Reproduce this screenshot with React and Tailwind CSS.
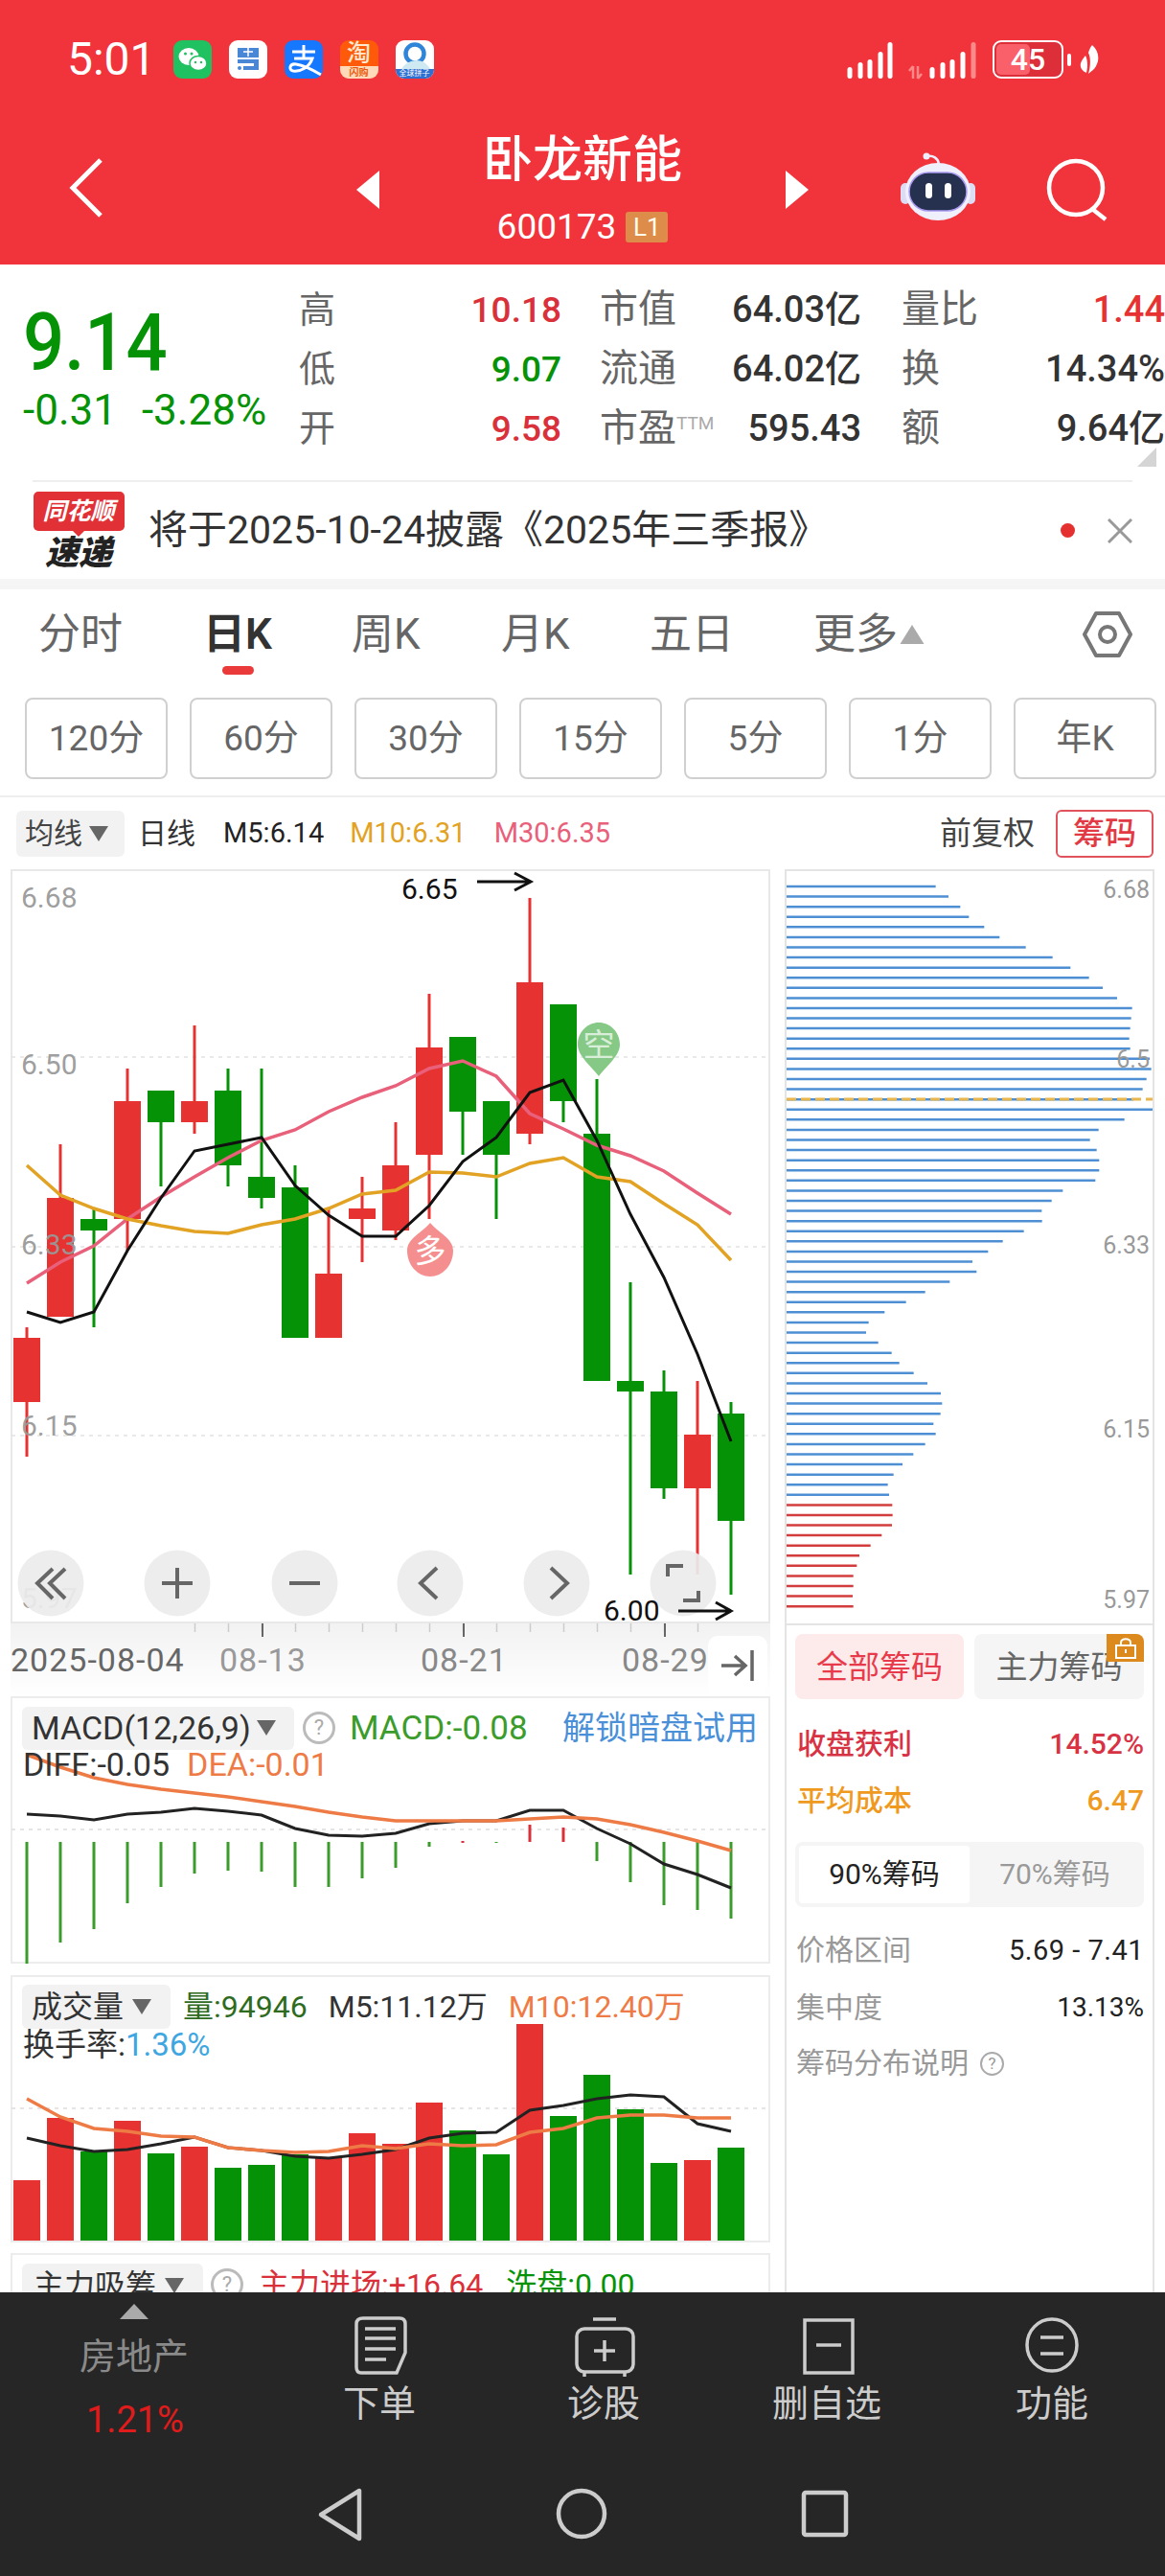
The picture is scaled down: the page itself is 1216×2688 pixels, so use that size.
import React from "react";

const GREEN = "#069206";
const RED = "#e73232";

// candle x = center of slot i, all y values are page pixels
const cx = (i) => 28 + 35 * i;

const candles = [
  ["r", 1385, 1396, 1463, 1520],
  ["r", 1194, 1250, 1374, 1374],
  ["g", 1262, 1272, 1284, 1385],
  ["r", 1115, 1149, 1272, 1305],
  ["g", 1138, 1138, 1171, 1238],
  ["r", 1070, 1149, 1171, 1183],
  ["g", 1115, 1138, 1216, 1238],
  ["g", 1115, 1228, 1250, 1261],
  ["g", 1216, 1239, 1396, 1396],
  ["r", 1261, 1329, 1396, 1396],
  ["r", 1228, 1261, 1272, 1317],
  ["r", 1171, 1216, 1284, 1294],
  ["r", 1037, 1093, 1205, 1272],
  ["g", 1082, 1082, 1160, 1205],
  ["g", 1149, 1149, 1205, 1272],
  ["r", 937, 1025, 1183, 1194],
  ["g", 1048, 1048, 1149, 1171],
  ["g", 1126, 1183, 1441, 1441],
  ["g", 1338, 1441, 1452, 1643],
  ["g", 1430, 1452, 1553, 1564],
  ["r", 1441, 1497, 1553, 1643],
  ["g", 1463, 1475, 1587, 1664],
];

const m5 = [1369, 1380, 1369, 1305, 1250, 1201, 1194, 1187, 1237, 1268, 1290, 1290, 1258, 1212, 1187, 1140, 1127, 1190, 1267, 1333, 1413, 1504];
const m10 = [1216, 1247, 1261, 1272, 1279, 1285, 1287, 1278, 1272, 1261, 1246, 1242, 1223, 1224, 1228, 1214, 1208, 1228, 1233, 1256, 1278, 1315];
const m30 = [1339, 1317, 1300, 1272, 1249, 1228, 1208, 1190, 1179, 1160, 1145, 1133, 1115, 1107, 1123, 1162, 1178, 1195, 1206, 1222, 1245, 1267];

const diff = [1893, 1895, 1899, 1893, 1891, 1887, 1890, 1894, 1908, 1915, 1916, 1913, 1903, 1900, 1900, 1889, 1889, 1908, 1924, 1945, 1956, 1970];
const dea = [1831, 1844, 1855, 1862, 1867, 1871, 1875, 1880, 1885, 1891, 1896, 1900, 1900, 1900, 1900, 1898, 1896, 1898, 1904, 1912, 1921, 1931];
const macdBars = [2049, 2027, 2013, 1986, 1969, 1955, 1952, 1953, 1969, 1969, 1960, 1949, 1927, 1921, 1923, 1904, 1907, 1942, 1964, 1988, 1993, 2002];

const volTops = [2275, 2210, 2245, 2213, 2247, 2240, 2262, 2259, 2248, 2252, 2226, 2237, 2194, 2223, 2248, 2112, 2208, 2165, 2201, 2257, 2254, 2241];
const volColors = "rrgrgrgggrrrrggrggggrg";
const volBlack = [2231, 2239, 2245, 2243, 2237, 2230, 2241, 2244, 2250, 2252, 2248, 2243, 2231, 2226, 2225, 2202, 2197, 2190, 2186, 2188, 2216, 2224];
const volOrange = [2190, 2209, 2221, 2224, 2229, 2230, 2241, 2244, 2246, 2245, 2239, 2242, 2237, 2239, 2238, 2225, 2221, 2210, 2207, 2207, 2210, 2210];

const depth = [530, 570, 607, 634, 682, 730, 812, 896, 952, 1010, 1053, 1098, 1145, 1142, 1139, 1136, 1139, 1200, 1205, 1190, 1178, 1150, 1212, 1121, 1040, 1013, 1034, 1042, 1042, 1030, 928, 893, 862, 863, 806, 740, 694, 645, 658, 574, 497, 437, 370, 320, 312, 350, 392, 416, 461, 504, 546, 550, 545, 523, 530, 497, 460, 426, 398, 380, 384, 394, 395, 393, 361, 326, 291, 283, 272, 272, 270, 272];

const pts = (ys) => ys.map((y, i) => `${cx(i)},${y}`).join(" ");

function Tri({ className }) {
  return (
    <svg viewBox="0 0 20 16" className={className}>
      <path d="M0 0H20L10 16Z" fill="#666" />
    </svg>
  );
}

function Help() {
  return (
    <span className="flex h-[34px] w-[34px] shrink-0 items-center justify-center rounded-full border-[3px] border-[#bbb] text-[22px] leading-none text-[#aaa]">
      ?
    </span>
  );
}

function StatusBar() {
  return (
    <div className="flex h-[124px] items-center pl-[70px] pr-[69px]">
      <span className="mr-[18px] text-[48px] leading-none text-white">5:01</span>
      <div className="flex gap-[18px]">
        <div className="h-10 w-10 overflow-hidden rounded-[9px] bg-[#1fc160]">
          <svg viewBox="0 0 40 40" className="h-10 w-10">
            <ellipse cx="16" cy="17" rx="10.5" ry="9" fill="#fff" />
            <ellipse cx="26" cy="24" rx="9" ry="7.5" fill="#fff" stroke="#1fc160" strokeWidth="1.5" />
            <circle cx="12.5" cy="14" r="1.5" fill="#1fc160" />
            <circle cx="19" cy="14" r="1.5" fill="#1fc160" />
            <circle cx="23" cy="23" r="1.2" fill="#1fc160" />
            <circle cx="29" cy="23" r="1.2" fill="#1fc160" />
          </svg>
        </div>
        <div className="h-10 w-10 overflow-hidden rounded-[9px] bg-white">
          <svg viewBox="0 0 40 40" className="h-10 w-10">
            <path d="M9 8H31V18H9Z" fill="#4a86d6" />
            <path d="M9 20H31V31H15V27H26V24H9Z" fill="#4a86d6" />
            <circle cx="11" cy="29" r="2" fill="#4a86d6" />
            <path d="M20 8V17M15 12H25" stroke="#fff" strokeWidth="1.5" />
          </svg>
        </div>
        <div className="h-10 w-10 overflow-hidden rounded-[9px] bg-[#1677ff]">
          <svg viewBox="0 0 40 40" className="h-10 w-10">
            <path d="M8 12H32M20 5V18M10 19H29C26 28 17 33 9 32C4 31 5 24 12 25C19 26 28 30 38 36" fill="none" stroke="#fff" strokeWidth="3" />
          </svg>
        </div>
        <div className="flex h-10 w-10 flex-col items-center overflow-hidden rounded-[9px] bg-[#ff5a0a]">
          <span className="text-[25px] font-medium leading-[27px] text-[#ffe9d0]">淘</span>
          <span className="h-[13px] w-full bg-[#ffd9b8] text-center text-[10px] font-bold leading-[13px] text-[#e8590c]">闪购</span>
        </div>
        <div className="flex h-10 w-10 flex-col items-center overflow-hidden rounded-[9px] bg-white">
          <svg viewBox="0 0 40 30" className="h-[30px] w-10">
            <circle cx="20" cy="14" r="9.5" fill="none" stroke="#2f86d9" strokeWidth="4.5" />
            <path d="M6 30C12 20 28 16 36 30Z" fill="#cfe9f3" />
          </svg>
          <span className="h-[10px] w-full whitespace-nowrap bg-[#2f6fd0] text-center text-[8px] leading-[10px] text-white">全球拼子</span>
        </div>
      </div>
      <div className="ml-auto flex items-center">
        <svg viewBox="0 0 140 42" className="h-[42px] w-[140px]">
          {[[4, 12], [15, 17], [25, 20], [36, 28], [46, 38]].map(([x, h]) => (
            <rect key={x} x={x - 2.5} y={41 - h} width="5" height={h} rx="2.5" fill="#fff" />
          ))}
          <path d="M70 28V41M70 28L66 33M75 41V28M75 41L79 36" stroke="#f88" strokeWidth="2.5" fill="none" />
          {[[90, 12], [101, 17], [111, 20], [122, 28]].map(([x, h]) => (
            <rect key={x} x={x - 2.5} y={41 - h} width="5" height={h} rx="2.5" fill="#fff" />
          ))}
          <rect x="130.5" y="3" width="5" height="38" rx="2.5" fill="#f98a8a" />
        </svg>
        <div className="relative ml-[13px] flex h-[40px] w-[74px] items-center justify-center overflow-hidden rounded-[9px] border-[2.5px] border-white bg-[#dc2f3a] text-[32px] font-medium leading-none text-white">
          <span className="absolute bottom-[2px] left-[2px] top-[2px] w-[35px] rounded-[5px] bg-[#f9606a]" />
          <span className="relative">45</span>
        </div>
        <span className="ml-[4px] h-[13px] w-[4px] rounded-full bg-white" />
        <svg viewBox="0 0 20 30" className="ml-[9px] h-[30px] w-5">
          <path d="M13 0C20 6 21 15 17 22C15 26 11 28 9 30C11 24 12 14 9 8C10 5 11 2 13 0Z M6 11C9 17 8 25 7 29C2 27 0 23 1 19C2 16 4 13 6 11Z" fill="#fff" />
        </svg>
      </div>
    </div>
  );
}

function TitleBar() {
  return (
    <div className="relative flex h-[152px] items-start justify-center">
      <div className="flex flex-col items-center pt-[16px]">
        <span className="text-[52px] font-medium leading-[56px] text-white">卧龙新能</span>
        <div className="mt-[22px] flex items-center">
          <span className="text-[37px] leading-none text-white">600173</span>
          <span className="ml-[10px] flex h-8 w-11 items-center justify-center rounded-[3px] bg-[#dd8c4a] text-[26px] leading-none text-[#ffe]">L1</span>
        </div>
      </div>
      <svg viewBox="0 0 36 62" className="absolute left-[72px] top-[41px] h-[62px] w-9">
        <path d="M33 2L4 31L33 60" fill="none" stroke="#fff" strokeWidth="5" />
      </svg>
      <svg viewBox="0 0 24 40" className="absolute left-[372px] top-[54px] h-10 w-6">
        <path d="M24 0V40L0 20Z" fill="#fff" />
      </svg>
      <svg viewBox="0 0 24 40" className="absolute left-[820px] top-[54px] h-10 w-6">
        <path d="M0 0V40L24 20Z" fill="#fff" />
      </svg>
      <svg viewBox="0 0 80 72" className="absolute left-[939px] top-[35px] h-[72px] w-20">
        <path d="M29 4C35 3 40 6 41 12" fill="none" stroke="#eef" strokeWidth="2.5" />
        <circle cx="28" cy="4" r="3.5" fill="#eef" />
        <rect x="1" y="32" width="10" height="22" rx="5" fill="#dcdcf5" />
        <rect x="69" y="32" width="10" height="22" rx="5" fill="#dcdcf5" />
        <ellipse cx="40" cy="41" rx="34" ry="30" fill="#f0f0fc" />
        <rect x="10" y="21" width="60" height="40" rx="20" fill="#26314f" stroke="#a99af0" strokeWidth="1.5" />
        <rect x="27" y="32" width="7" height="16" rx="3.5" fill="#fff" />
        <rect x="47" y="32" width="7" height="16" rx="3.5" fill="#fff" />
      </svg>
      <svg viewBox="0 0 64 66" className="absolute left-[1092px] top-[41px] h-[66px] w-16">
        <circle cx="31" cy="31" r="28" fill="none" stroke="#fff" strokeWidth="4.5" />
        <path d="M48 53L62 64" stroke="#fff" strokeWidth="4.5" />
      </svg>
    </div>
  );
}

function Quote() {
  const col1 = [["高", "10.18", "#d9303a"], ["低", "9.07", GREEN], ["开", "9.58", "#d9303a"]];
  const col2 = [["市值", "64.03亿"], ["流通", "64.02亿"], ["市盈", "595.43", "TTM"]];
  const col3 = [["量比", "1.44", RED], ["换", "14.34%", "#333"], ["额", "9.64亿", "#333"]];
  return (
    <div className="relative flex h-[225px] pt-[16px]">
      <div className="ml-[24px] w-[288px]">
        <div className="mt-[21px] scale-y-110 text-[76px] font-medium leading-[88px] text-[#069206]">9.14</div>
        <div className="mt-[5px] flex gap-[26px] text-[44px] leading-[44px] text-[#069206]">
          <span>-0.31</span>
          <span>-3.28%</span>
        </div>
      </div>
      <div className="w-[274px]">
        {col1.map(([l, v, c]) => (
          <div key={l} className="flex h-[62px] items-center justify-between">
            <span className="text-[38px] leading-none text-[#666]">{l}</span>
            <span className="text-[37px] font-medium leading-none" style={{ color: c }}>{v}</span>
          </div>
        ))}
      </div>
      <div className="ml-[40px] w-[273px]">
        {col2.map(([l, v, s]) => (
          <div key={l} className="flex h-[62px] items-center justify-between">
            <span className="text-[40px] leading-none text-[#666]">
              {l}
              {s && <span className="relative top-[-12px] text-[19px] text-[#aaa]">{s}</span>}
            </span>
            <span className="text-[38px] font-medium leading-none text-[#333]">{v}</span>
          </div>
        ))}
      </div>
      <div className="ml-[42px] flex-1">
        {col3.map(([l, v, c]) => (
          <div key={l} className="flex h-[62px] items-center justify-between">
            <span className="text-[40px] leading-none text-[#666]">{l}</span>
            <span className="text-[38px] font-medium leading-none" style={{ color: c }}>{v}</span>
          </div>
        ))}
      </div>
      <svg viewBox="0 0 20 20" className="absolute left-[1187px] top-[191px] h-5 w-5">
        <path d="M20 0V20H0Z" fill="#d5d5d5" />
      </svg>
    </div>
  );
}

function Notice() {
  return (
    <div className="mx-[34px] flex h-[103px] items-center border-t-2 border-[#eee]">
      <div className="flex w-[96px] flex-col items-center">
        <span className="relative flex h-[41px] w-[95px] items-center justify-center rounded-[5px] bg-[#e23037] text-[25px] font-bold italic leading-none text-white">
          同花顺
          <span className="absolute bottom-[-6px] left-[40px] h-0 w-0 border-x-[7px] border-t-[7px] border-x-transparent border-t-[#e23037]" />
        </span>
        <span className="mt-[6px] text-[35px] font-black italic leading-none text-[#222]">速递</span>
      </div>
      <span className="ml-[25px] text-[41px] leading-none text-[#333]">将于2025-10-24披露《2025年三季报》</span>
      <span className="ml-auto mr-[34px] h-[15px] w-[15px] rounded-full bg-[#e53030]" />
      <svg viewBox="0 0 26 26" className="h-[26px] w-[26px]">
        <path d="M1 1L25 25M25 1L1 25" stroke="#999" strokeWidth="3" />
      </svg>
    </div>
  );
}

function Tabs() {
  return (
    <div className="relative h-[113px] border-t-[11px] border-[#f5f5f5]">
      <div className="flex items-center pl-[40px] pt-[24px] text-[44px] leading-[46px] text-[#666]">
        <span className="w-[172px]">分时</span>
        <span className="relative w-[155px] font-semibold text-[#333]">
          日K
          <span className="absolute left-[20px] top-[56px] h-[9px] w-[33px] rounded-full bg-[#ea3a3a]" />
        </span>
        <span className="w-[156px]">周K</span>
        <span className="w-[155px]">月K</span>
        <span className="w-[171px]">五日</span>
        <span>更多</span>
        <svg viewBox="0 0 30 24" className="ml-[2px] h-[20px] w-[26px]">
          <path d="M15 0L30 24H0Z" fill="#aaa" />
        </svg>
      </div>
      <svg viewBox="0 0 52 50" className="absolute left-[1130px] top-[22px] h-[50px] w-[52px]">
        <path d="M14 3H38L50 25L38 47H14L2 25Z" fill="none" stroke="#777" strokeWidth="4" strokeLinejoin="round" />
        <circle cx="26" cy="25" r="8" fill="none" stroke="#777" strokeWidth="4" />
      </svg>
    </div>
  );
}

function Periods() {
  const items = ["120分", "60分", "30分", "15分", "5分", "1分", "年K"];
  return (
    <div className="flex h-[115px] gap-[23px] border-b-2 border-[#eee] pl-[26px] pt-[11px]">
      {items.map((t) => (
        <div
          key={t}
          className="flex h-[85px] w-[149px] items-center justify-center rounded-[8px] border-2 border-[#d0d0d0] text-[37px] leading-none text-[#666]"
        >
          {t}
        </div>
      ))}
    </div>
  );
}

function MainChart() {
  const btn = [53, 185, 318, 449, 581, 713];
  const grid = [1103, 1301, 1498];
  const labels = [["6.68", 936], ["6.50", 1110], ["6.33", 1298], ["6.15", 1487], ["5.97", 1667]];
  return (
    <svg viewBox="11 907 793 787" className="block h-[787px] w-[793px]">
      <rect x="12" y="908" width="791" height="785" fill="#fff" stroke="#e8e8e8" strokeWidth="2" />
      {grid.map((y) => (
        <line key={y} x1="12" x2="803" y1={y} y2={y} stroke="#e2e2e2" strokeWidth="1.5" strokeDasharray="4 5" />
      ))}
      {candles.map(([c, wt, bt, bb, wb], i) => {
        const color = c === "r" ? RED : GREEN;
        return (
          <g key={i}>
            <line x1={cx(i)} x2={cx(i)} y1={wt} y2={wb} stroke={color} strokeWidth="3" />
            <rect x={cx(i) - 14} y={bt} width="28" height={bb - bt} fill={color} />
          </g>
        );
      })}
      <polyline points={pts(m30)} fill="none" stroke="#e8607a" strokeWidth="3.5" />
      <polyline points={pts(m10)} fill="none" stroke="#e2a223" strokeWidth="3.5" />
      <polyline points={pts(m5)} fill="none" stroke="#111" strokeWidth="3" />
      {labels.map(([t, y]) => (
        <text key={t} x="22" y={y + 11} fontSize="30" fill="#999" fillOpacity="0.95">{t}</text>
      ))}
      <text x="419" y="938" fontSize="30" fill="#111">6.65</text>
      <path d="M498 920H552M537 911L554 920L537 929" fill="none" stroke="#111" strokeWidth="3" />
      <path d="M425 1305C425 1292 441 1286 449 1276C457 1286 473 1292 473 1305C473 1320 462 1332 449 1332C436 1332 425 1320 425 1305Z" fill="#f58f8f" />
      <text x="449" y="1317" fontSize="33" fill="#fff" textAnchor="middle">多</text>
      <path d="M603 1090C603 1077 613 1067 625 1067C637 1067 647 1077 647 1090C647 1102 633 1112 625 1123C617 1112 603 1102 603 1090Z" fill="#86c986" />
      <text x="625" y="1102" fontSize="33" fill="#d8eed8" textAnchor="middle">空</text>
      {btn.map((x) => (
        <circle key={x} cx={x} cy="1652" r="34.5" fill="#ececec" fillOpacity="0.92" />
      ))}
      <g fill="none" stroke="#666" strokeWidth="4">
        <path d="M55 1637L39 1652L55 1668M68 1637L52 1652L68 1668" />
        <path d="M169 1652H201M185 1636V1668" />
        <path d="M302 1652H334" />
        <path d="M456 1636L439 1652L456 1668" />
        <path d="M575 1636L592 1652L575 1668" />
        <path d="M697 1645V1634H713M729 1660V1670H713" />
      </g>
      <text x="630" y="1691" fontSize="30" fill="#111">6.00</text>
      <path d="M708 1681H762M747 1672L763 1681L747 1690" fill="none" stroke="#111" strokeWidth="3" />
    </svg>
  );
}

function TimeAxis() {
  const minor = [];
  for (let i = 0; i < 16; i++) minor.push(203.5 + i * 35);
  return (
    <div className="relative h-[76px] bg-gradient-to-b from-[#f2f2f2] to-white">
      <svg viewBox="11 1694 793 16" className="absolute left-0 top-0 h-4 w-[793px]">
        {minor.map((x) => (
          <line key={x} x1={x} x2={x} y1="1694" y2="1703" stroke="#ccc" strokeWidth="1.5" />
        ))}
        {[274, 484, 694].map((x) => (
          <line key={x} x1={x} x2={x} y1="1694" y2="1708" stroke="#666" strokeWidth="2" />
        ))}
      </svg>
      <div className="absolute left-0 top-[20px] text-[34px] leading-9 tracking-[1px] text-[#666]">2025-08-04</div>
      <div className="absolute left-[218px] top-[20px] text-[34px] leading-9 tracking-[1px] text-[#999]">08-13</div>
      <div className="absolute left-[428px] top-[20px] text-[34px] leading-9 tracking-[1px] text-[#888]">08-21</div>
      <div className="absolute left-[638px] top-[20px] text-[34px] leading-9 tracking-[1px] text-[#888]">08-29</div>
      <div className="absolute left-[728px] top-[13px] flex h-[62px] w-[62px] items-center justify-center rounded-[10px] bg-white">
        <svg viewBox="0 0 36 32" className="h-8 w-9">
          <path d="M1 16H25M15 6L26 16L15 26M33 0V32" fill="none" stroke="#666" strokeWidth="3.5" />
        </svg>
      </div>
    </div>
  );
}

function MacdPanel() {
  return (
    <div className="relative h-[279px] border-2 border-[#ececec]">
      <div className="flex h-[54px] items-center pl-[10px] pt-[8px]">
        <div className="flex h-[45px] w-[284px] items-center rounded-[6px] bg-[#f2f2f2] pl-[10px] text-[34px] leading-none text-[#333]">
          MACD(12,26,9)
          <Tri className="ml-[6px] h-4 w-5" />
        </div>
        <span className="ml-[9px]"><Help /></span>
        <span className="ml-[15px] text-[35px] leading-none text-[#3b9c2b]">MACD:-0.08</span>
        <span className="ml-auto mr-[11px] text-[34px] leading-none text-[#4a90d9]">解锁暗盘试用</span>
      </div>
      <div className="relative z-10 -mt-[3px] flex gap-[18px] pl-[11px] text-[34px] leading-[36px]">
        <span className="text-[#333]">DIFF:-0.05</span>
        <span className="text-[#ee7b45]">DEA:-0.01</span>
      </div>
      <svg viewBox="11 1770 793 279" className="absolute left-[-2px] top-[-2px] h-[279px] w-[793px]">
        <line x1="12" x2="803" y1="1909" y2="1909" stroke="#ddd" strokeWidth="1.5" strokeDasharray="4 5" />
        {macdBars.map((y, i) => {
          const up = i === 15 || i === 16 || i === 13;
          const top = i === 13 ? 1921 : up ? y : 1922;
          const bottom = i === 13 ? 1923 : up ? 1922 : y;
          return (
            <line key={i} x1={cx(i)} x2={cx(i)} y1={top} y2={bottom} stroke={up ? "#d9303a" : "#3b9c2b"} strokeWidth="3" />
          );
        })}
        <polyline points={pts(diff)} fill="none" stroke="#222" strokeWidth="3" />
        <polyline points={pts(dea)} fill="none" stroke="#ee7b45" strokeWidth="3.5" />
      </svg>
    </div>
  );
}

function VolumePanel() {
  return (
    <div className="relative mt-[12px] h-[279px] border-x-2 border-t-2 border-[#ececec]">
      <div className="flex h-[54px] items-center pl-[10px] pt-[8px] text-[32px] leading-none">
        <div className="flex h-[46px] w-[155px] items-center rounded-[6px] bg-[#f2f2f2] pl-[10px] text-[#333]">
          成交量
          <Tri className="ml-[9px] h-4 w-5" />
        </div>
        <span className="ml-[13px] text-[#2f6b1f]">量:94946</span>
        <span className="ml-[22px] text-[#333]">M5:11.12万</span>
        <span className="ml-[22px] text-[#ee7b45]">M10:12.40万</span>
      </div>
      <div className="relative z-10 -mt-[1px] pl-[11px] text-[33px] leading-9 text-[#333]">
        换手率:<span className="text-[#3ea6e0]">1.36%</span>
      </div>
      <svg viewBox="11 2061 793 279" className="absolute left-[-2px] top-[-2px] h-[279px] w-[793px]">
        <line x1="12" x2="803" y1="2200" y2="2200" stroke="#ddd" strokeWidth="1.5" strokeDasharray="4 5" />
        {volTops.map((y, i) => (
          <rect key={i} x={cx(i) - 14} y={y} width="28" height={2339 - y} fill={volColors[i] === "r" ? RED : GREEN} />
        ))}
        <polyline points={pts(volBlack)} fill="none" stroke="#222" strokeWidth="3" />
        <polyline points={pts(volOrange)} fill="none" stroke="#ee7b45" strokeWidth="3.5" />
        <line x1="12" x2="803" y1="2339" y2="2339" stroke="#ececec" strokeWidth="2" />
      </svg>
    </div>
  );
}

function ThirdPanel() {
  return (
    <div className="mt-[11px] h-[41px] overflow-hidden border-x-2 border-t-2 border-[#ececec]">
      <div className="flex items-start pl-[10px] pt-[9px] text-[32px] leading-none">
        <div className="flex h-[46px] w-[189px] items-center rounded-[6px] bg-[#f2f2f2] pl-[12px] text-[#333]">
          主力吸筹
          <Tri className="ml-[9px] h-4 w-5" />
        </div>
        <span className="ml-[8px] mt-[5px]"><Help /></span>
        <span className="ml-[16px] mt-[6px] text-[#d9303a]">主力进场:+16.64</span>
        <span className="ml-[24px] mt-[6px] text-[#069206]">洗盘:0.00</span>
      </div>
    </div>
  );
}

function DepthChart() {
  const labels = [["6.68", 928], ["6.5", 1105], ["6.33", 1299], ["6.15", 1491], ["5.97", 1669]];
  return (
    <svg viewBox="821 909 382 785" className="block h-[785px] w-[382px]">
      {depth.map((z, i) => {
        const y = 925 + i * 10.58;
        return (
          <line key={i} x1="821" x2={800 + z / 3} y1={y} y2={y} stroke={i > 60 ? "#d33c3c" : "#4e8fd4"} strokeWidth="2.5" />
        );
      })}
      <line x1="821" x2="1203" y1="1147" y2="1147" stroke="#e8b64c" strokeWidth="3" strokeDasharray="10 5" />
      {labels.map(([t, y]) => (
        <text key={t} x="1200" y={y + 9} fontSize="25" fill="#999" textAnchor="end">{t}</text>
      ))}
    </svg>
  );
}

function ChipPanel() {
  return (
    <div className="pl-[9px] pr-[9px] pt-[9px]">
      <div className="flex gap-[11px] text-[33px] leading-none">
        <div className="flex h-[68px] w-[176px] items-center justify-center rounded-[8px] bg-[#fdeaea] text-[#e83a4a]">全部筹码</div>
        <div className="relative flex h-[68px] w-[177px] items-center justify-center rounded-[8px] bg-[#f5f5f5] text-[#666]">
          主力筹码
          <div className="absolute right-0 top-0 flex h-[29px] w-[39px] items-center justify-center rounded-bl-[2px] rounded-tr-[8px] bg-[#dc8a1e]">
            <svg viewBox="0 0 24 22" className="h-[22px] w-6">
              <path d="M7 8V5C7 0 17 0 17 5V8M2 8H22V21H2ZM12 12V16" fill="none" stroke="#fff" strokeWidth="2" />
            </svg>
          </div>
        </div>
      </div>
      <div className="mt-[27px] flex items-center justify-between pl-[2px] text-[30px] font-medium leading-10 text-[#d83344]">
        <span>收盘获利</span>
        <span>14.52%</span>
      </div>
      <div className="mt-[19px] flex items-center justify-between pl-[2px] text-[30px] font-medium leading-10 text-[#ef9a1e]">
        <span>平均成本</span>
        <span>6.47</span>
      </div>
      <div className="mt-[23px] flex h-[68px] rounded-[8px] bg-[#f5f5f5] p-[4px] text-[30px] leading-none">
        <div className="flex w-[178px] items-center justify-center rounded-[4px] bg-white text-[#222]">90%筹码</div>
        <div className="flex flex-1 items-center justify-center text-[#999]">70%筹码</div>
      </div>
      <div className="mt-[25px] flex items-center justify-between pl-[1px] text-[30px] leading-10 text-[#999]">
        <span>价格区间</span>
        <span className="text-[29px] tracking-[0.5px] text-[#222]">5.69 - 7.41</span>
      </div>
      <div className="mt-[20px] flex items-center justify-between pl-[1px] text-[30px] leading-10 text-[#999]">
        <span>集中度</span>
        <span className="text-[28px] text-[#222]">13.13%</span>
      </div>
      <div className="mt-[18px] flex items-center gap-[12px] pl-[1px] text-[30px] leading-10 text-[#999]">
        <span>筹码分布说明</span>
        <span className="flex h-[25px] w-[25px] items-center justify-center rounded-full border-2 border-[#aaa] text-[17px] leading-none">?</span>
      </div>
    </div>
  );
}

function BottomBar() {
  const actions = [
    ["下单", 358],
    ["诊股", 592],
    ["删自选", 806],
    ["功能", 1060],
  ];
  return (
    <div className="relative h-[296px] bg-[#262626]">
      <svg viewBox="0 0 30 16" className="absolute left-[125px] top-[12px] h-4 w-[30px]">
        <path d="M15 0L30 16H0Z" fill="#aaa" />
      </svg>
      <span className="absolute left-[83px] top-[47px] text-[38px] leading-10 text-[#8a8a8a]">房地产</span>
      <span className="absolute left-[90px] top-[113px] text-[38px] leading-10 text-[#e01b1b]">1.21%</span>
      <svg viewBox="0 0 1216 120" className="absolute left-0 top-0 h-[120px] w-[1216px]">
        <g fill="none" stroke="#ccc" strokeWidth="3.5">
          <path d="M379 27H417Q423 27 423 33V63L414 84H377Q372 84 372 78V33Q372 27 379 27Z" />
          <path d="M381 38H413M381 48H413M381 59H413M381 70H403" />
          <rect x="602" y="38" width="59" height="45" rx="8" />
          <path d="M619 28H643M631 50V72M620 61H642M610 84V88M652 84V88" />
          <rect x="840" y="29" width="50" height="55" />
          <path d="M852 55H878" />
          <ellipse cx="1098" cy="55" rx="26" ry="27" />
          <path d="M1086 47H1110M1086 64H1110" />
        </g>
      </svg>
      {actions.map(([t, x]) => (
        <span key={t} className="absolute top-[96px] text-[38px] leading-10 text-[#ccc]" style={{ left: x }}>{t}</span>
      ))}
      <svg viewBox="0 0 1216 90" className="absolute left-0 top-[195px] h-[90px] w-[1216px]">
        <g fill="none" stroke="#ccc" strokeWidth="4.5" strokeLinejoin="round">
          <path d="M375 12V62L335 37Z" />
          <circle cx="607" cy="36" r="24" />
          <rect x="839" y="14" width="44" height="44" rx="2" />
        </g>
      </svg>
    </div>
  );
}

export default function App() {
  return (
    <div className="h-[2688px] w-[1216px] overflow-hidden bg-white font-['Roboto','Noto_Sans_CJK_SC',sans-serif]">
      <div className="h-[276px] bg-[#f1333b]">
        <StatusBar />
        <TitleBar />
      </div>
      <Quote />
      <Notice />
      <Tabs />
      <Periods />
      <div className="flex h-[75px] items-center pl-[17px] pr-[12px]">
        <div className="flex h-[48px] w-[113px] items-center rounded-[6px] bg-[#f2f2f2] pl-[9px] text-[30px] leading-none text-[#444]">
          均线
          <Tri className="ml-[7px] h-4 w-5" />
        </div>
        <span className="ml-[14px] text-[30px] leading-none text-[#333]">日线</span>
        <span className="ml-[29px] text-[29px] leading-none text-[#222]">M5:6.14</span>
        <span className="ml-[27px] text-[29px] leading-none text-[#e2a223]">M10:6.31</span>
        <span className="ml-[29px] text-[29px] leading-none text-[#e8607a]">M30:6.35</span>
        <span className="ml-auto text-[33px] leading-none text-[#444]">前复权</span>
        <span className="ml-[22px] flex h-[50px] w-[102px] items-center justify-center rounded-[6px] border-2 border-[#e0525c] text-[33px] font-medium leading-none text-[#e23a44]">筹码</span>
      </div>
      <div className="flex h-[1485px] items-start pl-[11px]">
        <div className="w-[793px]">
          <MainChart />
          <TimeAxis />
          <MacdPanel />
          <VolumePanel />
          <ThirdPanel />
        </div>
        <div className="ml-[15px] h-[1485px] w-[386px] border-x-2 border-t-2 border-[#e4e4e4]">
          <DepthChart />
          <div className="border-t-2 border-[#e4e4e4]">
            <ChipPanel />
          </div>
        </div>
      </div>
      <BottomBar />
    </div>
  );
}
